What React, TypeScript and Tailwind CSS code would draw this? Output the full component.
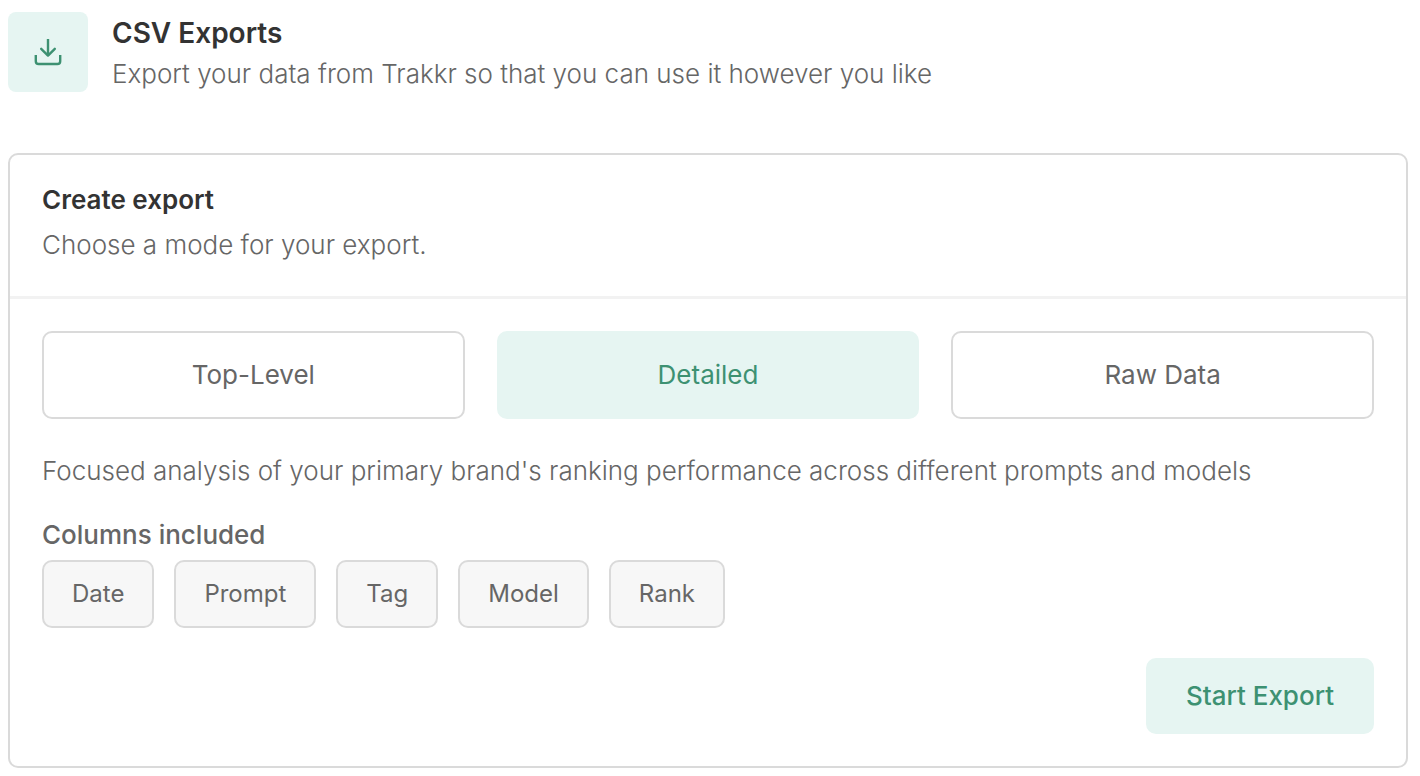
import React, { useState } from 'react';

const modes = ['Top-Level', 'Detailed', 'Raw Data'];
const columns = ['Date', 'Prompt', 'Tag', 'Model', 'Rank'];

function DownloadIcon() {
  return (
    <svg
      className="h-8 w-8"
      viewBox="0 0 32 32"
      fill="none"
      stroke="currentColor"
      strokeWidth="2.4"
      strokeLinejoin="round"
      aria-hidden="true"
    >
      <path d="M3.8 19v6.2a2.8 2.8 0 0 0 2.8 2.8h18.8a2.8 2.8 0 0 0 2.8-2.8V19" />
      <path d="M9.2 12.8l6.8 6.8 6.8-6.8" strokeLinecap="round" />
      <path d="M16 3v16.4" />
    </svg>
  );
}

export default function App() {
  const [mode, setMode] = useState('Detailed');

  return (
    <main className="bg-white py-3 pr-3 pl-2 font-['Inter',sans-serif] text-[#666666]">
      <header className="flex items-start gap-6">
        <div className="flex h-20 w-20 shrink-0 items-center justify-center rounded-lg bg-[#e6f5f2] text-[#3d9172]">
          <DownloadIcon />
        </div>
        <div>
          <h1 className="text-[28px] leading-[42px] font-semibold text-[#333333]">CSV Exports</h1>
          <p className="text-[26px] leading-10 font-light">
            Export your data from Trakkr so that you can use it however you like
          </p>
        </div>
      </header>

      <section className="mt-[59px] rounded-[10px] border-2 border-[#dadada]">
        <div className="border-b-3 border-[#f2f2f2] px-8 pt-6 pb-[31px]">
          <h2 className="text-[26px] leading-[42px] font-semibold text-[#333333]">Create export</h2>
          <p className="mt-1 text-[26px] leading-10 font-light">Choose a mode for your export.</p>
        </div>

        <div className="p-8">
          <div className="grid grid-cols-3 gap-8">
            {modes.map((name) => (
              <button
                key={name}
                type="button"
                aria-pressed={mode === name}
                onClick={() => setMode(name)}
                className={`h-22 rounded-[10px] border-2 pb-0.5 text-[26px] ${
                  mode === name
                    ? 'border-[#e6f5f2] bg-[#e6f5f2] text-[#3d9172]'
                    : 'border-[#dadada] bg-white'
                }`}
              >
                {name}
              </button>
            ))}
          </div>

          <p className="mt-8 text-[26px] leading-10 font-light">
            Focused analysis of your primary brand's ranking performance across different prompts and models
          </p>

          <h3 className="mt-6 text-[26px] leading-10 font-medium">Columns included</h3>
          <ul className="mt-[5px] flex flex-wrap gap-5">
            {columns.map((column) => (
              <li
                key={column}
                className="rounded-[10px] border-2 border-[#dadada] bg-[#f7f7f7] px-7 py-4 text-2xl leading-8"
              >
                {column}
              </li>
            ))}
          </ul>

          <div className="mt-[30px] flex justify-end">
            <button
              type="button"
              className="rounded-[10px] bg-[#e6f5f2] px-10 py-5 text-[26px] leading-9 font-medium text-[#3d9172]"
            >
              Start Export
            </button>
          </div>
        </div>
      </section>
    </main>
  );
}
